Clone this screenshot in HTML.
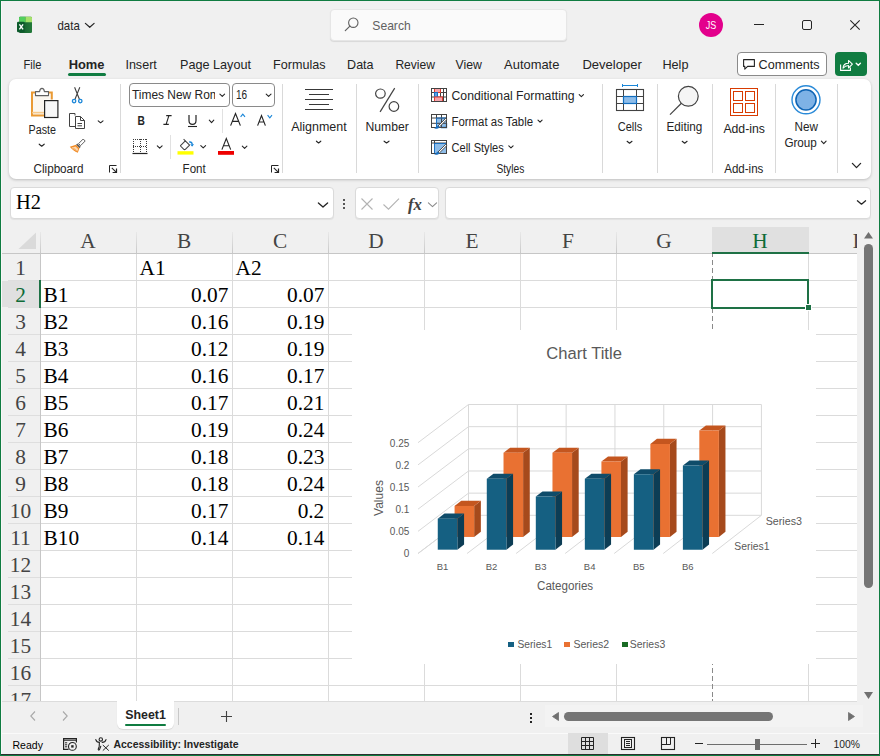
<!DOCTYPE html>
<html><head><meta charset="utf-8">
<style>
*{margin:0;padding:0;box-sizing:border-box}
html,body{width:880px;height:756px;overflow:hidden;background:#f0f0f0;font-family:"Liberation Sans",sans-serif;color:#242424}
.a{position:absolute}
svg{position:absolute;overflow:visible}
#win{position:absolute;left:0;top:0;width:880px;height:756px;overflow:hidden;background:#f0f0f0}
#bd{position:absolute;left:0;top:0;width:880px;height:756px;border:1px solid #107c41;pointer-events:none}
</style></head><body>
<div id="win">
<svg style="left:17px;top:16px" width="16" height="17" viewBox="0 0 16 17">
 <defs><linearGradient id="xg" x1="0" y1="0" x2="1" y2="0"><stop offset="0" stop-color="#125a2c"/><stop offset="1" stop-color="#237a3a"/></linearGradient></defs>
 <rect x="2" y="0.8" width="13" height="16.2" rx="1.3" fill="url(#xg)"/>
 <path d="M3.2 0.8 H8.5 V6.3 H2 V2 Q2 0.8 3.2 0.8 Z" fill="#52cf5c"/>
 <path d="M8.5 0.8 H13.8 Q15 0.8 15 2 V6.3 H8.5 Z" fill="#a6e26c"/>
 <rect x="0" y="5.8" width="7.6" height="10.4" rx="1.2" fill="#0c5a2b"/>
 <path d="M2.4 8.3 L6.1 13.3 M6.1 8.3 L2.4 13.3" stroke="#fff" stroke-width="1.4"/></svg>
<svg style="left:0;top:0" width="1" height="1"><path d="M85.4 23.4 L89.75 27.3 L94.1 23.4" stroke="#242424" stroke-width="1.2" fill="none" stroke-linecap="round" stroke-linejoin="round"/></svg>
<div class="a" style="left:330px;top:9px;width:237px;height:32px;background:#fafafa;border:1px solid #e6e6e6;border-radius:4px;box-shadow:0 1px 1px rgba(0,0,0,0.10)"></div>
<svg style="left:344px;top:17px" width="15" height="15" viewBox="0 0 15 15"><circle cx="9.3" cy="5.7" r="4.7" stroke="#616161" stroke-width="1.1" fill="none"/><path d="M5.9 9.1 L1.3 13.7" stroke="#616161" stroke-width="1.2" stroke-linecap="round"/></svg>
<div class="a" style="left:699px;top:13px;width:24px;height:24px;border-radius:50%;background:#e3008c"></div>
<div class="a" style="left:754px;top:24px;width:10px;height:1px;background:#242424"></div>
<div class="a" style="left:802px;top:20px;width:10px;height:10px;border:1px solid #242424;border-radius:2px"></div>
<svg style="left:850px;top:20px" width="10" height="10"><path d="M0.3 0.3L9.7 9.7M9.7 0.3L0.3 9.7" stroke="#242424" stroke-width="1.1"/></svg>
<div class="a" style="left:68px;top:73px;width:38px;height:3px;border-radius:2px;background:#107c41"></div>
<div class="a" style="left:737px;top:52px;width:90px;height:24px;border:1px solid #8a8a8a;border-radius:4px;background:#fff"></div>
<svg style="left:743px;top:59px" width="12" height="11"><path d="M0.6 0.6 H11.4 V7.4 H4.6 L1.8 10.2 V7.4 H0.6 Z" stroke="#242424" stroke-width="1.1" fill="none" stroke-linejoin="round"/></svg>
<div class="a" style="left:835px;top:52px;width:32px;height:24px;border-radius:4px;background:#107c41"></div>
<svg style="left:839px;top:58px" width="24" height="14"><path d="M1.6 6.5 V12.4 H11.4 V9.5" stroke="#fff" stroke-width="1.1" fill="none"/><path d="M4 10.2 C4.2 7 6.4 5.2 9.5 5.2 V2.4 L13.4 6.2 L9.5 10 V7.4 C7.2 7.4 5.5 8.2 4 10.2 Z" stroke="#fff" stroke-width="1.05" fill="none" stroke-linejoin="round"/><path d="M17.2 5.3 L19.3 7.3 L21.4 5.3" stroke="#fff" stroke-width="1.4" fill="none" stroke-linecap="round"/></svg>
<div class="a" style="left:9px;top:79px;width:862px;height:100px;background:#fff;border-radius:7px;box-shadow:0 1px 3px rgba(0,0,0,0.22)"></div>
<div class="a" style="left:120px;top:84px;width:1px;height:89px;background:#d9d9d9"></div>
<div class="a" style="left:282px;top:84px;width:1px;height:89px;background:#d9d9d9"></div>
<div class="a" style="left:356px;top:84px;width:1px;height:89px;background:#d9d9d9"></div>
<div class="a" style="left:418px;top:84px;width:1px;height:89px;background:#d9d9d9"></div>
<div class="a" style="left:602px;top:84px;width:1px;height:89px;background:#d9d9d9"></div>
<div class="a" style="left:657px;top:84px;width:1px;height:89px;background:#d9d9d9"></div>
<div class="a" style="left:712px;top:84px;width:1px;height:89px;background:#d9d9d9"></div>
<div class="a" style="left:775px;top:84px;width:1px;height:89px;background:#d9d9d9"></div>
<div class="a" style="left:837px;top:84px;width:1px;height:89px;background:#d9d9d9"></div>
<svg style="left:109px;top:165px" width="9" height="9"><path d="M0.5 7.5 V0.5 H7.5" stroke="#242424" stroke-width="1" fill="none"/><path d="M2.8 2.8 L7.4 7.4" stroke="#242424" stroke-width="1.1" fill="none"/><path d="M3.6 7.5 H7.5 V3.6" stroke="#242424" stroke-width="1.2" fill="none"/></svg>
<svg style="left:271px;top:165px" width="9" height="9"><path d="M0.5 7.5 V0.5 H7.5" stroke="#242424" stroke-width="1" fill="none"/><path d="M2.8 2.8 L7.4 7.4" stroke="#242424" stroke-width="1.1" fill="none"/><path d="M3.6 7.5 H7.5 V3.6" stroke="#242424" stroke-width="1.2" fill="none"/></svg>
<svg style="left:30px;top:86px" width="30" height="33" viewBox="0 0 30 33">
 <path d="M2.2 7.4 H21.6 V13.4 H14 V29.4 H2.2 Z" fill="#fbf7f0"/>
 <path d="M2 6.4 V29.4 H14" stroke="#ea9a34" stroke-width="2" fill="none"/>
 <path d="M2 26.6 H14" stroke="#f6c98a" stroke-width="1.6" fill="none"/>
 <path d="M1 6.4 H5.5 M18.5 6.4 H21.8 V13.5" stroke="#ea9a34" stroke-width="2" fill="none"/>
 <path d="M5.5 9.6 V5.6 H9.6 C9.8 3.6 10.6 2.4 12 2.4 C13.4 2.4 14.2 3.6 14.4 5.6 H18.5 V9.6 Z" stroke="#616161" stroke-width="1.1" fill="#fff" stroke-linejoin="round"/>
 <rect x="14.6" y="14.6" width="13.3" height="16.9" stroke="#242424" stroke-width="1.2" fill="#f7f7f7"/></svg>
<svg style="left:0;top:0" width="1" height="1"><path d="M39.199999999999996 144.20000000000002 L41.7 146.2 L44.2 144.20000000000002" stroke="#242424" stroke-width="1.1" fill="none" stroke-linecap="round" stroke-linejoin="round"/></svg>
<svg style="left:70px;top:86px" width="14" height="18" viewBox="0 0 14 18">
 <path d="M4.6 1.2 L9.4 13.2 M9.8 1.2 L5 13.2" stroke="#424242" stroke-width="1.1" fill="none"/>
 <circle cx="4.1" cy="15.1" r="1.7" stroke="#1a86d8" stroke-width="1.3" fill="#fff"/>
 <circle cx="10.3" cy="15.1" r="1.7" stroke="#1a86d8" stroke-width="1.3" fill="#fff"/></svg>
<svg style="left:68px;top:112px" width="18" height="18" viewBox="0 0 18 18">
 <path d="M7 3.5 V1.5 H1.5 V14.5 H7" stroke="#424242" stroke-width="1" fill="none"/>
 <path d="M7.5 4.5 H12.5 L16.5 8.5 V16.5 H7.5 Z" stroke="#424242" stroke-width="1" fill="#fff" stroke-linejoin="round"/>
 <path d="M12.5 4.5 V8.5 H16.5" stroke="#424242" stroke-width="1" fill="none"/>
 <path d="M9.5 11.5 H14 M9.5 13.8 H14" stroke="#424242" stroke-width="1"/></svg>
<svg style="left:0;top:0" width="1" height="1"><path d="M98.2 120.80000000000001 L100.6 122.8 L103.0 120.80000000000001" stroke="#242424" stroke-width="1.1" fill="none" stroke-linecap="round" stroke-linejoin="round"/></svg>
<svg style="left:69px;top:138px" width="17" height="16" viewBox="0 0 17 16">
 <path d="M14.2 1 L16.2 3 L11.6 7.6 L9.6 5.6 Z" stroke="#616161" stroke-width="1" fill="#fff" stroke-linejoin="round"/>
 <path d="M8.4 5.4 L11.8 8.8 L10.4 10.2 L7 6.8 Z" fill="#616161"/>
 <path d="M7 6.8 L10.4 10.2 L8.8 14.8 C5.8 13.6 2.6 11.4 0.8 8.8 Z" fill="#f08a24"/>
 <path d="M6.6 8.4 L9.2 11 L8.2 13.4 C6.2 12.6 4 11.2 2.6 9.6 Z" fill="#fcd7ae"/>
 <path d="M4.2 10 L7.6 12.8" stroke="#f08a24" stroke-width="0.8"/></svg>
<div class="a" style="left:129px;top:83px;width:101px;height:24px;border:1px solid #8a8a8a;border-radius:4px;background:#fff"></div>
<div class="a" style="left:130px;top:84px;width:85px;height:22px;overflow:hidden"><svg style="left:-130px;top:-84px" width="880" height="200"><text x="132.00" y="98.75" font-family="Liberation Sans" font-size="12.3" font-weight="normal" fill="#242424" textLength="101.02" lengthAdjust="spacingAndGlyphs">Times New Roman</text></svg></div>
<svg style="left:0;top:0" width="1" height="1"><path d="M219.9 94.2 L222.25 96.39999999999999 L224.6 94.2" stroke="#242424" stroke-width="1.1" fill="none" stroke-linecap="round" stroke-linejoin="round"/></svg>
<div class="a" style="left:232px;top:83px;width:43px;height:24px;border:1px solid #8a8a8a;border-radius:4px;background:#fff"></div>
<svg style="left:0;top:0" width="1" height="1"><path d="M266.2 94.2 L268.6 96.39999999999999 L271.0 94.2" stroke="#242424" stroke-width="1.1" fill="none" stroke-linecap="round" stroke-linejoin="round"/></svg>
<svg style="left:163px;top:115px" width="9" height="10"><path d="M3.2 0.6 H8.6 M0.4 9.4 H5.8 M5.9 0.6 L3.1 9.4" stroke="#242424" stroke-width="1.1" fill="none"/></svg>
<svg style="left:188px;top:115px" width="10" height="13"><path d="M1 0 V5.6 C1 8 2.3 9.4 4.5 9.4 C6.7 9.4 8 8 8 5.6 V0" stroke="#242424" stroke-width="1.2" fill="none"/><path d="M0 11.5 H9" stroke="#242424" stroke-width="1.1"/></svg>
<svg style="left:0;top:0" width="1" height="1"><path d="M209.3 120.2 L211.55 122.6 L213.79999999999998 120.2" stroke="#242424" stroke-width="1.1" fill="none" stroke-linecap="round" stroke-linejoin="round"/></svg>
<div class="a" style="left:222px;top:109px;width:1px;height:24px;background:#e1e1e1"></div>
<svg style="left:230px;top:113px" width="12" height="13"><path d="M0.6 12.6 L5.5 0.6 L10.4 12.6 M2.4 8.4 H8.6" stroke="#242424" stroke-width="1.15" fill="none"/></svg>
<svg style="left:240px;top:113px" width="6" height="5"><path d="M0.6 3.8 L2.8 1.2 L5 3.8" stroke="#1a86d8" stroke-width="1.1" fill="none"/></svg>
<svg style="left:257px;top:115px" width="10" height="11"><path d="M0.6 10.6 L4.5 0.6 L8.4 10.6 M2 7 H7" stroke="#242424" stroke-width="1.15" fill="none"/></svg>
<svg style="left:267px;top:114px" width="6" height="5"><path d="M0.6 1.2 L2.8 3.8 L5 1.2" stroke="#1a86d8" stroke-width="1.1" fill="none"/></svg>
<svg style="left:132px;top:138px" width="17" height="17">
 <path d="M1.5 1 V15 M14.5 1 V15 M8.5 1 V15 M1 1.5 H15 M1 8.5 H15" stroke="#3a3a3a" stroke-width="1" stroke-dasharray="1 1" fill="none"/>
 <path d="M0.5 15.5 H15.5" stroke="#242424" stroke-width="1.2"/></svg>
<svg style="left:0;top:0" width="1" height="1"><path d="M157.3 145.8 L159.7 148.2 L162.1 145.8" stroke="#242424" stroke-width="1.1" fill="none" stroke-linecap="round" stroke-linejoin="round"/></svg>
<div class="a" style="left:170px;top:135px;width:1px;height:24px;background:#e1e1e1"></div>
<svg style="left:177px;top:137px" width="17" height="18">
 <path d="M3.5 8.6 L8.3 3.8 L12.6 8.1 L8.6 12.1 C8 12.7 7.2 12.7 6.6 12.1 L3.5 9 Z" stroke="#424242" stroke-width="1.05" fill="none" stroke-linejoin="round"/>
 <path d="M8.3 3.8 L6.6 2.1" stroke="#424242" stroke-width="1.05"/>
 <path d="M12.2 5 C14.6 4.6 15.4 6.2 15.2 8.6" stroke="#1a86d8" stroke-width="1.4" fill="none"/>
 <path d="M13.8 7.2 L15.2 9.2 L16.4 7.2" stroke="#1a86d8" stroke-width="1" fill="none"/>
 <rect x="0.5" y="14.2" width="16" height="3.4" fill="#ffff00"/></svg>
<svg style="left:0;top:0" width="1" height="1"><path d="M200.8 145.6 L203.2 147.79999999999998 L205.6 145.6" stroke="#242424" stroke-width="1.1" fill="none" stroke-linecap="round" stroke-linejoin="round"/></svg>
<svg style="left:218px;top:138px" width="17" height="17"><path d="M3.9 11.6 L8.3 0.6 L12.7 11.6 M5.5 7.7 H11.1" stroke="#242424" stroke-width="1.1" fill="none"/><rect x="0" y="13" width="16" height="3.8" fill="#ee0000"/></svg>
<svg style="left:0;top:0" width="1" height="1"><path d="M242.3 146.1 L244.60000000000002 148.29999999999998 L246.9 146.1" stroke="#242424" stroke-width="1.1" fill="none" stroke-linecap="round" stroke-linejoin="round"/></svg>
<svg style="left:305px;top:88px" width="29" height="23"><path d="M0 1.5 H28 M4 6.5 H24 M0 11.5 H28 M4 16.5 H24 M0 21.5 H28" stroke="#383838" stroke-width="1"/></svg>
<svg style="left:0;top:0" width="1" height="1"><path d="M316.4 141.20000000000002 L318.6 143.0 L320.8 141.20000000000002" stroke="#242424" stroke-width="1.1" fill="none" stroke-linecap="round" stroke-linejoin="round"/></svg>
<svg style="left:374px;top:87px" width="27" height="26"><ellipse cx="6.4" cy="6.6" rx="4.8" ry="4.6" stroke="#424242" stroke-width="1.2" fill="none"/><ellipse cx="19.9" cy="19.5" rx="4.8" ry="4.8" stroke="#424242" stroke-width="1.2" fill="none"/><path d="M20.7 1.1 L6.1 24.9" stroke="#424242" stroke-width="1.2"/></svg>
<svg style="left:0;top:0" width="1" height="1"><path d="M384.09999999999997 141.20000000000002 L386.54999999999995 143.0 L389.0 141.20000000000002" stroke="#242424" stroke-width="1.1" fill="none" stroke-linecap="round" stroke-linejoin="round"/></svg>
<svg style="left:431px;top:88px" width="17" height="15">
 <rect x="0.5" y="0.5" width="15" height="13" fill="#fff"/>
 <path d="M0.5 4.5 H15.5 M0.5 9 H15.5 M3.5 0.5 V13.5 M9.5 0.5 V13.5 M12.5 0.5 V13.5" stroke="#424242" stroke-width="1"/>
 <rect x="3.5" y="0.5" width="6" height="4" fill="#f4a3aa" stroke="#e23b2e" stroke-width="1"/>
 <rect x="3.5" y="4.5" width="3" height="4.5" fill="#5aa2e6" stroke="#1a6fc0" stroke-width="1"/>
 <rect x="3.5" y="9" width="8" height="4.5" fill="#f4a3aa" stroke="#e23b2e" stroke-width="1"/>
 <rect x="0.5" y="0.5" width="15" height="13" fill="none" stroke="#424242" stroke-width="1"/></svg>
<svg style="left:0;top:0" width="1" height="1"><path d="M579.1999999999999 94.60000000000001 L581.3499999999999 96.6 L583.5 94.60000000000001" stroke="#242424" stroke-width="1.1" fill="none" stroke-linecap="round" stroke-linejoin="round"/></svg>
<svg style="left:431px;top:114px" width="17" height="15">
 <rect x="0.5" y="0.5" width="15" height="13" fill="#fff"/>
 <rect x="5.5" y="4" width="10" height="9.5" fill="#8dbce8"/>
 <path d="M0.5 4 H15.5 M0.5 9.3 H15.5 M5.5 0.5 V13.5 M10.5 0.5 V13.5" stroke="#424242" stroke-width="1"/>
 <path d="M5.5 13.5 V4 H15.5" stroke="#1a6fc0" stroke-width="1" fill="none"/>
 <path d="M15.5 9 V13.5 H10" stroke="#1a6fc0" stroke-width="1.3" fill="none"/>
 <rect x="0.5" y="0.5" width="15" height="13" fill="none" stroke="#424242" stroke-width="1"/>
 <path d="M14.6 4.4 L15.8 5.6 L8.2 13.2 L7 12 Z" fill="#fff" stroke="#424242" stroke-width="0.9" stroke-linejoin="round"/>
 <path d="M6.8 11.6 L8.6 13.4 C7.6 14.6 5.2 15 3.2 14.6 C4.4 13.8 5.4 12.6 6.8 11.6 Z" fill="#1a6fc0"/></svg>
<svg style="left:0;top:0" width="1" height="1"><path d="M538.0 120.2 L540.05 122.19999999999999 L542.1 120.2" stroke="#242424" stroke-width="1.1" fill="none" stroke-linecap="round" stroke-linejoin="round"/></svg>
<svg style="left:431px;top:140px" width="17" height="15">
 <rect x="0.5" y="0.5" width="15" height="13" fill="#fff"/>
 <rect x="3.5" y="3" width="12" height="10.5" fill="#8dbce8"/>
 <path d="M0.5 3 H15.5 M3.5 0.5 V13.5" stroke="#424242" stroke-width="1"/>
 <path d="M3.5 13.5 V3.5 H15.5" stroke="#1a6fc0" stroke-width="1" fill="none"/>
 <rect x="0.5" y="0.5" width="15" height="13" fill="none" stroke="#424242" stroke-width="1"/>
 <path d="M14.6 4.4 L15.8 5.6 L8.2 13.2 L7 12 Z" fill="#fff" stroke="#424242" stroke-width="0.9" stroke-linejoin="round"/>
 <path d="M6.8 11.6 L8.6 13.4 C7.6 14.6 5.2 15 3.2 14.6 C4.4 13.8 5.4 12.6 6.8 11.6 Z" fill="#1a6fc0"/></svg>
<svg style="left:0;top:0" width="1" height="1"><path d="M508.79999999999995 145.8 L510.95 147.79999999999998 L513.1 145.8" stroke="#242424" stroke-width="1.1" fill="none" stroke-linecap="round" stroke-linejoin="round"/></svg>
<svg style="left:615px;top:84px" width="30" height="28">
 <path d="M7.5 1.5 H22.5 M7.5 0 V3 M22.5 0 V3" stroke="#1a86d8" stroke-width="1"/>
 <rect x="8.5" y="12.5" width="13" height="7" fill="#8dbce8"/>
 <rect x="1.5" y="5.5" width="27" height="21" stroke="#424242" stroke-width="1.1" fill="none"/>
 <path d="M8.5 5 V26.5 M21.5 5 V26.5 M1 12.5 H29 M1 19.5 H29" stroke="#424242" stroke-width="1"/>
 <rect x="8.5" y="12.5" width="13" height="7" stroke="#0f6cbd" stroke-width="1.2" fill="none"/></svg>
<svg style="left:0;top:0" width="1" height="1"><path d="M627.1 141.3 L629.55 143.2 L632.0 141.3" stroke="#242424" stroke-width="1.1" fill="none" stroke-linecap="round" stroke-linejoin="round"/></svg>
<svg style="left:668px;top:84px" width="34" height="32"><circle cx="20.3" cy="12.3" r="9.9" stroke="#424242" stroke-width="1.2" fill="#f5f5f5"/><path d="M13.4 19.3 L2 30.6" stroke="#424242" stroke-width="1.2"/></svg>
<svg style="left:0;top:0" width="1" height="1"><path d="M682.1999999999999 141.3 L684.65 143.2 L687.1 141.3" stroke="#242424" stroke-width="1.1" fill="none" stroke-linecap="round" stroke-linejoin="round"/></svg>
<svg style="left:729px;top:87px" width="30" height="30"><rect x="1.5" y="1.5" width="27" height="27" stroke="#d83b01" stroke-width="1" fill="none"/><rect x="4.5" y="4.5" width="9" height="9" stroke="#d83b01" stroke-width="1" fill="none"/><rect x="16.5" y="4.5" width="9" height="9" stroke="#d83b01" stroke-width="1" fill="none"/><rect x="4.5" y="16.5" width="9" height="9" stroke="#d83b01" stroke-width="1" fill="none"/><rect x="16.5" y="16.5" width="9" height="9" stroke="#d83b01" stroke-width="1" fill="none"/></svg>
<svg style="left:790px;top:84px" width="32" height="32"><circle cx="16" cy="15.8" r="14" stroke="#2a8ad8" stroke-width="1.4" fill="#fff"/><circle cx="16" cy="15.8" r="10.1" stroke="#0f64b4" stroke-width="1.5" fill="#7eb2e6"/></svg>
<svg style="left:0;top:0" width="1" height="1"><path d="M821.4 141.1 L823.75 143.6 L826.1 141.1" stroke="#242424" stroke-width="1.1" fill="none" stroke-linecap="round" stroke-linejoin="round"/></svg>
<svg style="left:0;top:0" width="1" height="1"><path d="M852.4 163.4 L856.5 167.6 L860.6 163.4" stroke="#242424" stroke-width="1.3" fill="none" stroke-linecap="round" stroke-linejoin="round"/></svg>
<div class="a" style="left:10px;top:187px;width:324px;height:32px;background:#fff;border-radius:4px;border:1px solid #dadada;box-shadow:0 1px 1px rgba(0,0,0,0.06)"></div>
<svg style="left:0;top:0" width="1" height="1"><path d="M318.4 202.9 L323.0 207.1 L327.6 202.9" stroke="#242424" stroke-width="1.3" fill="none" stroke-linecap="round" stroke-linejoin="round"/></svg>
<div class="a" style="left:343px;top:199px;width:2px;height:2px;background:#242424;border-radius:1px"></div>
<div class="a" style="left:343px;top:203px;width:2px;height:2px;background:#242424;border-radius:1px"></div>
<div class="a" style="left:343px;top:207px;width:2px;height:2px;background:#242424;border-radius:1px"></div>
<div class="a" style="left:355px;top:187px;width:84px;height:32px;background:#fff;border-radius:4px;border:1px solid #dadada;box-shadow:0 1px 1px rgba(0,0,0,0.06)"></div>
<svg style="left:361px;top:198px" width="12" height="12"><path d="M0.5 0.5 L11.5 11.5 M11.5 0.5 L0.5 11.5" stroke="#b3b3b3" stroke-width="1.1"/></svg>
<svg style="left:383px;top:198px" width="17" height="12"><path d="M0.5 6.5 L5.5 11.2 L16 0.6" stroke="#b3b3b3" stroke-width="1.1" fill="none"/></svg>
<svg style="left:0;top:0" width="1" height="1"><path d="M428.4 202.9 L432.5 206.6 L436.6 202.9" stroke="#8a8a8a" stroke-width="1.1" fill="none" stroke-linecap="round" stroke-linejoin="round"/></svg>
<div class="a" style="left:445px;top:187px;width:426px;height:32px;background:#fff;border-radius:4px;border:1px solid #dadada;box-shadow:0 1px 1px rgba(0,0,0,0.06)"></div>
<svg style="left:0;top:0" width="1" height="1"><path d="M857.4 200.8 L861.5 204.2 L865.6 200.8" stroke="#242424" stroke-width="1.3" fill="none" stroke-linecap="round" stroke-linejoin="round"/></svg>
<div class="a" style="left:41px;top:254px;width:816px;height:447px;background:#fff"></div>
<div class="a" style="left:41px;top:280px;width:816px;height:1px;background:#dbdbdb"></div>
<div class="a" style="left:8px;top:280px;width:32px;height:1px;background:#dedede"></div>
<div class="a" style="left:41px;top:307px;width:816px;height:1px;background:#dbdbdb"></div>
<div class="a" style="left:8px;top:307px;width:32px;height:1px;background:#dedede"></div>
<div class="a" style="left:41px;top:334px;width:816px;height:1px;background:#dbdbdb"></div>
<div class="a" style="left:8px;top:334px;width:32px;height:1px;background:#dedede"></div>
<div class="a" style="left:41px;top:361px;width:816px;height:1px;background:#dbdbdb"></div>
<div class="a" style="left:8px;top:361px;width:32px;height:1px;background:#dedede"></div>
<div class="a" style="left:41px;top:388px;width:816px;height:1px;background:#dbdbdb"></div>
<div class="a" style="left:8px;top:388px;width:32px;height:1px;background:#dedede"></div>
<div class="a" style="left:41px;top:415px;width:816px;height:1px;background:#dbdbdb"></div>
<div class="a" style="left:8px;top:415px;width:32px;height:1px;background:#dedede"></div>
<div class="a" style="left:41px;top:442px;width:816px;height:1px;background:#dbdbdb"></div>
<div class="a" style="left:8px;top:442px;width:32px;height:1px;background:#dedede"></div>
<div class="a" style="left:41px;top:469px;width:816px;height:1px;background:#dbdbdb"></div>
<div class="a" style="left:8px;top:469px;width:32px;height:1px;background:#dedede"></div>
<div class="a" style="left:41px;top:496px;width:816px;height:1px;background:#dbdbdb"></div>
<div class="a" style="left:8px;top:496px;width:32px;height:1px;background:#dedede"></div>
<div class="a" style="left:41px;top:523px;width:816px;height:1px;background:#dbdbdb"></div>
<div class="a" style="left:8px;top:523px;width:32px;height:1px;background:#dedede"></div>
<div class="a" style="left:41px;top:550px;width:816px;height:1px;background:#dbdbdb"></div>
<div class="a" style="left:8px;top:550px;width:32px;height:1px;background:#dedede"></div>
<div class="a" style="left:41px;top:577px;width:816px;height:1px;background:#dbdbdb"></div>
<div class="a" style="left:8px;top:577px;width:32px;height:1px;background:#dedede"></div>
<div class="a" style="left:41px;top:604px;width:816px;height:1px;background:#dbdbdb"></div>
<div class="a" style="left:8px;top:604px;width:32px;height:1px;background:#dedede"></div>
<div class="a" style="left:41px;top:631px;width:816px;height:1px;background:#dbdbdb"></div>
<div class="a" style="left:8px;top:631px;width:32px;height:1px;background:#dedede"></div>
<div class="a" style="left:41px;top:658px;width:816px;height:1px;background:#dbdbdb"></div>
<div class="a" style="left:8px;top:658px;width:32px;height:1px;background:#dedede"></div>
<div class="a" style="left:41px;top:685px;width:816px;height:1px;background:#dbdbdb"></div>
<div class="a" style="left:8px;top:685px;width:32px;height:1px;background:#dedede"></div>
<div class="a" style="left:136px;top:254px;width:1px;height:447px;background:#dbdbdb"></div>
<div class="a" style="left:136px;top:232px;width:1px;height:21px;background:linear-gradient(to bottom,#e8e8e8,#c9c9c9)"></div>
<div class="a" style="left:232px;top:254px;width:1px;height:447px;background:#dbdbdb"></div>
<div class="a" style="left:232px;top:232px;width:1px;height:21px;background:linear-gradient(to bottom,#e8e8e8,#c9c9c9)"></div>
<div class="a" style="left:328px;top:254px;width:1px;height:447px;background:#dbdbdb"></div>
<div class="a" style="left:328px;top:232px;width:1px;height:21px;background:linear-gradient(to bottom,#e8e8e8,#c9c9c9)"></div>
<div class="a" style="left:424px;top:254px;width:1px;height:447px;background:#dbdbdb"></div>
<div class="a" style="left:424px;top:232px;width:1px;height:21px;background:linear-gradient(to bottom,#e8e8e8,#c9c9c9)"></div>
<div class="a" style="left:520px;top:254px;width:1px;height:447px;background:#dbdbdb"></div>
<div class="a" style="left:520px;top:232px;width:1px;height:21px;background:linear-gradient(to bottom,#e8e8e8,#c9c9c9)"></div>
<div class="a" style="left:616px;top:254px;width:1px;height:447px;background:#dbdbdb"></div>
<div class="a" style="left:616px;top:232px;width:1px;height:21px;background:linear-gradient(to bottom,#e8e8e8,#c9c9c9)"></div>
<div class="a" style="left:712px;top:254px;width:1px;height:447px;background:#dbdbdb"></div>
<div class="a" style="left:712px;top:232px;width:1px;height:21px;background:linear-gradient(to bottom,#e8e8e8,#c9c9c9)"></div>
<div class="a" style="left:808px;top:254px;width:1px;height:447px;background:#dbdbdb"></div>
<div class="a" style="left:808px;top:232px;width:1px;height:21px;background:linear-gradient(to bottom,#e8e8e8,#c9c9c9)"></div>
<div class="a" style="left:0px;top:253px;width:857px;height:1px;background:#c6c6c6"></div>
<div class="a" style="left:40px;top:232px;width:1px;height:21px;background:linear-gradient(to bottom,#e8e8e8,#c9c9c9)"></div>
<div class="a" style="left:40px;top:253px;width:1px;height:448px;background:#c6c6c6"></div>
<svg style="left:18px;top:232px" width="19" height="18"><path d="M18 0.5 V17 H0.5 Z" fill="#dadada"/></svg>
<div class="a" style="left:712px;top:227px;width:97px;height:26px;background:#e0e0e0"></div>
<div class="a" style="left:712px;top:252px;width:97px;height:2px;background:#1e7145"></div>
<div class="a" style="left:1px;top:281px;width:38px;height:26px;background:#e0e0e0"></div>
<div class="a" style="left:39px;top:280px;width:2px;height:28px;background:#1e7145"></div>
<div class="a" style="left:0;top:232px;width:857px;height:469px;overflow:hidden"><svg style="left:0;top:-232px" width="880" height="756"><text x="88" y="247.7" text-anchor="middle" font-family="Liberation Serif" font-size="21.33" fill="#444444">A</text><text x="184" y="247.7" text-anchor="middle" font-family="Liberation Serif" font-size="21.33" fill="#444444">B</text><text x="280" y="247.7" text-anchor="middle" font-family="Liberation Serif" font-size="21.33" fill="#444444">C</text><text x="376" y="247.7" text-anchor="middle" font-family="Liberation Serif" font-size="21.33" fill="#444444">D</text><text x="472" y="247.7" text-anchor="middle" font-family="Liberation Serif" font-size="21.33" fill="#444444">E</text><text x="568" y="247.7" text-anchor="middle" font-family="Liberation Serif" font-size="21.33" fill="#444444">F</text><text x="664" y="247.7" text-anchor="middle" font-family="Liberation Serif" font-size="21.33" fill="#444444">G</text><text x="760" y="247.7" text-anchor="middle" font-family="Liberation Serif" font-size="21.33" fill="#0e6b38">H</text><text x="856" y="247.7" text-anchor="middle" font-family="Liberation Serif" font-size="21.33" fill="#444444">I</text><text x="20.5" y="274.7" text-anchor="middle" font-family="Liberation Serif" font-size="21.33" fill="#444444">1</text><text x="20.5" y="301.7" text-anchor="middle" font-family="Liberation Serif" font-size="21.33" fill="#0e6b38">2</text><text x="20.5" y="328.7" text-anchor="middle" font-family="Liberation Serif" font-size="21.33" fill="#444444">3</text><text x="20.5" y="355.7" text-anchor="middle" font-family="Liberation Serif" font-size="21.33" fill="#444444">4</text><text x="20.5" y="382.7" text-anchor="middle" font-family="Liberation Serif" font-size="21.33" fill="#444444">5</text><text x="20.5" y="409.7" text-anchor="middle" font-family="Liberation Serif" font-size="21.33" fill="#444444">6</text><text x="20.5" y="436.7" text-anchor="middle" font-family="Liberation Serif" font-size="21.33" fill="#444444">7</text><text x="20.5" y="463.7" text-anchor="middle" font-family="Liberation Serif" font-size="21.33" fill="#444444">8</text><text x="20.5" y="490.7" text-anchor="middle" font-family="Liberation Serif" font-size="21.33" fill="#444444">9</text><text x="20.5" y="517.7" text-anchor="middle" font-family="Liberation Serif" font-size="21.33" fill="#444444">10</text><text x="20.5" y="544.7" text-anchor="middle" font-family="Liberation Serif" font-size="21.33" fill="#444444">11</text><text x="20.5" y="571.7" text-anchor="middle" font-family="Liberation Serif" font-size="21.33" fill="#444444">12</text><text x="20.5" y="598.7" text-anchor="middle" font-family="Liberation Serif" font-size="21.33" fill="#444444">13</text><text x="20.5" y="625.7" text-anchor="middle" font-family="Liberation Serif" font-size="21.33" fill="#444444">14</text><text x="20.5" y="652.7" text-anchor="middle" font-family="Liberation Serif" font-size="21.33" fill="#444444">15</text><text x="20.5" y="679.7" text-anchor="middle" font-family="Liberation Serif" font-size="21.33" fill="#444444">16</text><text x="20.5" y="706.7" text-anchor="middle" font-family="Liberation Serif" font-size="21.33" fill="#444444">17</text><text x="139.5" y="274.7" font-family="Liberation Serif" font-size="21.33" fill="#000">A1</text><text x="235.5" y="274.7" font-family="Liberation Serif" font-size="21.33" fill="#000">A2</text><text x="43.5" y="301.7" font-family="Liberation Serif" font-size="21.33" fill="#000">B1</text><text x="228.3" y="301.7" text-anchor="end" font-family="Liberation Serif" font-size="21.33" fill="#000">0.07</text><text x="324.3" y="301.7" text-anchor="end" font-family="Liberation Serif" font-size="21.33" fill="#000">0.07</text><text x="43.5" y="328.7" font-family="Liberation Serif" font-size="21.33" fill="#000">B2</text><text x="228.3" y="328.7" text-anchor="end" font-family="Liberation Serif" font-size="21.33" fill="#000">0.16</text><text x="324.3" y="328.7" text-anchor="end" font-family="Liberation Serif" font-size="21.33" fill="#000">0.19</text><text x="43.5" y="355.7" font-family="Liberation Serif" font-size="21.33" fill="#000">B3</text><text x="228.3" y="355.7" text-anchor="end" font-family="Liberation Serif" font-size="21.33" fill="#000">0.12</text><text x="324.3" y="355.7" text-anchor="end" font-family="Liberation Serif" font-size="21.33" fill="#000">0.19</text><text x="43.5" y="382.7" font-family="Liberation Serif" font-size="21.33" fill="#000">B4</text><text x="228.3" y="382.7" text-anchor="end" font-family="Liberation Serif" font-size="21.33" fill="#000">0.16</text><text x="324.3" y="382.7" text-anchor="end" font-family="Liberation Serif" font-size="21.33" fill="#000">0.17</text><text x="43.5" y="409.7" font-family="Liberation Serif" font-size="21.33" fill="#000">B5</text><text x="228.3" y="409.7" text-anchor="end" font-family="Liberation Serif" font-size="21.33" fill="#000">0.17</text><text x="324.3" y="409.7" text-anchor="end" font-family="Liberation Serif" font-size="21.33" fill="#000">0.21</text><text x="43.5" y="436.7" font-family="Liberation Serif" font-size="21.33" fill="#000">B6</text><text x="228.3" y="436.7" text-anchor="end" font-family="Liberation Serif" font-size="21.33" fill="#000">0.19</text><text x="324.3" y="436.7" text-anchor="end" font-family="Liberation Serif" font-size="21.33" fill="#000">0.24</text><text x="43.5" y="463.7" font-family="Liberation Serif" font-size="21.33" fill="#000">B7</text><text x="228.3" y="463.7" text-anchor="end" font-family="Liberation Serif" font-size="21.33" fill="#000">0.18</text><text x="324.3" y="463.7" text-anchor="end" font-family="Liberation Serif" font-size="21.33" fill="#000">0.23</text><text x="43.5" y="490.7" font-family="Liberation Serif" font-size="21.33" fill="#000">B8</text><text x="228.3" y="490.7" text-anchor="end" font-family="Liberation Serif" font-size="21.33" fill="#000">0.18</text><text x="324.3" y="490.7" text-anchor="end" font-family="Liberation Serif" font-size="21.33" fill="#000">0.24</text><text x="43.5" y="517.7" font-family="Liberation Serif" font-size="21.33" fill="#000">B9</text><text x="228.3" y="517.7" text-anchor="end" font-family="Liberation Serif" font-size="21.33" fill="#000">0.17</text><text x="324.3" y="517.7" text-anchor="end" font-family="Liberation Serif" font-size="21.33" fill="#000">0.2</text><text x="43.5" y="544.7" font-family="Liberation Serif" font-size="21.33" fill="#000">B10</text><text x="228.3" y="544.7" text-anchor="end" font-family="Liberation Serif" font-size="21.33" fill="#000">0.14</text><text x="324.3" y="544.7" text-anchor="end" font-family="Liberation Serif" font-size="21.33" fill="#000">0.14</text></svg></div>
<div class="a" style="left:712px;top:254px;width:1px;height:447px;background:#fff"></div>
<div class="a" style="left:712px;top:254px;width:1px;height:447px;background:repeating-linear-gradient(to bottom,#8a8a8a 0 5px,transparent 5px 8px);background-position:0 -2px"></div>
<div class="a" style="left:711px;top:279px;width:98px;height:30px;border:2px solid #1e7145"></div>
<div class="a" style="left:805px;top:304px;width:7px;height:7px;background:#1e7145;border:1px solid #fff"></div>
<svg style="left:352px;top:330px" width="464" height="334"><rect x="0" y="0" width="464" height="334" fill="#fff"/><path d="M66.00 223.50 L116.50 185.31" stroke="#d9d9d9" stroke-width="1" fill="none"/><path d="M116.50 185.31 L409.42 185.31" stroke="#d9d9d9" stroke-width="1" fill="none"/><path d="M66.00 201.34 L116.50 163.15" stroke="#d9d9d9" stroke-width="1" fill="none"/><path d="M116.50 163.15 L409.42 163.15" stroke="#d9d9d9" stroke-width="1" fill="none"/><path d="M66.00 179.18 L116.50 140.99" stroke="#d9d9d9" stroke-width="1" fill="none"/><path d="M116.50 140.99 L409.42 140.99" stroke="#d9d9d9" stroke-width="1" fill="none"/><path d="M66.00 157.02 L116.50 118.83" stroke="#d9d9d9" stroke-width="1" fill="none"/><path d="M116.50 118.83 L409.42 118.83" stroke="#d9d9d9" stroke-width="1" fill="none"/><path d="M66.00 134.86 L116.50 96.67" stroke="#d9d9d9" stroke-width="1" fill="none"/><path d="M116.50 96.67 L409.42 96.67" stroke="#d9d9d9" stroke-width="1" fill="none"/><path d="M66.00 112.70 L116.50 74.51" stroke="#d9d9d9" stroke-width="1" fill="none"/><path d="M116.50 74.51 L409.42 74.51" stroke="#d9d9d9" stroke-width="1" fill="none"/><path d="M116.50 185.31 L116.50 74.51" stroke="#d9d9d9" stroke-width="1" fill="none"/><path d="M66.00 223.50 L116.50 185.31" stroke="#d9d9d9" stroke-width="1" fill="none"/><path d="M165.32 185.31 L165.32 74.51" stroke="#d9d9d9" stroke-width="1" fill="none"/><path d="M115.05 223.50 L165.32 185.31" stroke="#d9d9d9" stroke-width="1" fill="none"/><path d="M214.14 185.31 L214.14 74.51" stroke="#d9d9d9" stroke-width="1" fill="none"/><path d="M164.10 223.50 L214.14 185.31" stroke="#d9d9d9" stroke-width="1" fill="none"/><path d="M262.96 185.31 L262.96 74.51" stroke="#d9d9d9" stroke-width="1" fill="none"/><path d="M213.15 223.50 L262.96 185.31" stroke="#d9d9d9" stroke-width="1" fill="none"/><path d="M311.78 185.31 L311.78 74.51" stroke="#d9d9d9" stroke-width="1" fill="none"/><path d="M262.20 223.50 L311.78 185.31" stroke="#d9d9d9" stroke-width="1" fill="none"/><path d="M360.60 185.31 L360.60 74.51" stroke="#d9d9d9" stroke-width="1" fill="none"/><path d="M311.25 223.50 L360.60 185.31" stroke="#d9d9d9" stroke-width="1" fill="none"/><path d="M409.42 185.31 L409.42 74.51" stroke="#d9d9d9" stroke-width="1" fill="none"/><path d="M360.30 223.50 L409.42 185.31" stroke="#d9d9d9" stroke-width="1" fill="none"/><polygon points="122.15,206.95 128.86,201.86 128.86,170.83 122.15,175.93" fill="#a64a1c"/><polygon points="102.57,175.93 122.15,175.93 128.86,170.83 109.29,170.83" fill="#c4561f"/><polygon points="102.57,206.95 122.15,206.95 122.15,175.93 102.57,175.93" fill="#e97132"/><polygon points="171.10,206.95 177.78,201.86 177.78,117.65 171.10,122.74" fill="#a64a1c"/><polygon points="151.52,122.74 171.10,122.74 177.78,117.65 158.21,117.65" fill="#c4561f"/><polygon points="151.52,206.95 171.10,206.95 171.10,122.74 151.52,122.74" fill="#e97132"/><polygon points="220.05,206.95 226.70,201.86 226.70,117.65 220.05,122.74" fill="#a64a1c"/><polygon points="200.47,122.74 220.05,122.74 226.70,117.65 207.13,117.65" fill="#c4561f"/><polygon points="200.47,206.95 220.05,206.95 220.05,122.74 200.47,122.74" fill="#e97132"/><polygon points="269.00,206.95 275.62,201.86 275.62,126.51 269.00,131.61" fill="#a64a1c"/><polygon points="249.42,131.61 269.00,131.61 275.62,126.51 256.05,126.51" fill="#c4561f"/><polygon points="249.42,206.95 269.00,206.95 269.00,131.61 249.42,131.61" fill="#e97132"/><polygon points="317.95,206.95 324.54,201.86 324.54,108.79 317.95,113.88" fill="#a64a1c"/><polygon points="298.37,113.88 317.95,113.88 324.54,108.79 304.97,108.79" fill="#c4561f"/><polygon points="298.37,206.95 317.95,206.95 317.95,113.88 298.37,113.88" fill="#e97132"/><polygon points="366.90,206.95 373.46,201.86 373.46,95.49 366.90,100.58" fill="#a64a1c"/><polygon points="347.32,100.58 366.90,100.58 373.46,95.49 353.89,95.49" fill="#c4561f"/><polygon points="347.32,206.95 366.90,206.95 366.90,100.58 347.32,100.58" fill="#e97132"/><polygon points="105.37,219.68 112.08,214.59 112.08,183.57 105.37,188.66" fill="#0c3d55"/><polygon points="85.76,188.66 105.37,188.66 112.08,183.57 92.48,183.57" fill="#0f4c6a"/><polygon points="85.76,219.68 105.37,219.68 105.37,188.66 85.76,188.66" fill="#156082"/><polygon points="154.40,219.68 161.08,214.59 161.08,143.68 154.40,148.77" fill="#0c3d55"/><polygon points="134.79,148.77 154.40,148.77 161.08,143.68 141.48,143.68" fill="#0f4c6a"/><polygon points="134.79,219.68 154.40,219.68 154.40,148.77 134.79,148.77" fill="#156082"/><polygon points="203.42,219.68 210.07,214.59 210.07,161.41 203.42,166.50" fill="#0c3d55"/><polygon points="183.81,166.50 203.42,166.50 210.07,161.41 190.47,161.41" fill="#0f4c6a"/><polygon points="183.81,219.68 203.42,219.68 203.42,166.50 183.81,166.50" fill="#156082"/><polygon points="252.45,219.68 259.07,214.59 259.07,143.68 252.45,148.77" fill="#0c3d55"/><polygon points="232.84,148.77 252.45,148.77 259.07,143.68 239.47,143.68" fill="#0f4c6a"/><polygon points="232.84,219.68 252.45,219.68 252.45,148.77 232.84,148.77" fill="#156082"/><polygon points="301.48,219.68 308.07,214.59 308.07,139.25 301.48,144.34" fill="#0c3d55"/><polygon points="281.87,144.34 301.48,144.34 308.07,139.25 288.47,139.25" fill="#0f4c6a"/><polygon points="281.87,219.68 301.48,219.68 301.48,144.34 281.87,144.34" fill="#156082"/><polygon points="350.50,219.68 357.06,214.59 357.06,130.38 350.50,135.47" fill="#0c3d55"/><polygon points="330.89,135.47 350.50,135.47 357.06,130.38 337.46,130.38" fill="#0f4c6a"/><polygon points="330.89,219.68 350.50,219.68 350.50,135.47 330.89,135.47" fill="#156082"/></svg>
<div class="a" style="left:508.1px;top:641.7px;width:5.8px;height:5.8px;background:#156082"></div>
<div class="a" style="left:563.8px;top:641.7px;width:5.8px;height:5.8px;background:#e97132"></div>
<div class="a" style="left:622.1px;top:641.7px;width:5.8px;height:5.8px;background:#196b24"></div>
<div class="a" style="left:857px;top:232px;width:21px;height:469px;background:#f0f0f0"></div>
<svg style="left:864px;top:232px" width="9" height="7"><path d="M0 6.5 L4.5 0 L9 6.5Z" fill="#707070"/></svg>
<div class="a" style="left:864px;top:244px;width:9px;height:344px;border-radius:5px;background:#757575"></div>
<svg style="left:864px;top:692px" width="9" height="7"><path d="M0 0 L4.5 7 L9 0Z" fill="#707070"/></svg>
<div class="a" style="left:1px;top:701px;width:877px;height:32px;background:#f0f0f0"></div>
<div class="a" style="left:1px;top:701px;width:856px;height:1px;background:#dcdcdc"></div>
<svg style="left:30px;top:711px" width="6" height="10"><path d="M5 0.5 L0.8 5 L5 9.5" stroke="#a8a8a8" stroke-width="1.1" fill="none"/></svg>
<svg style="left:62px;top:711px" width="6" height="10"><path d="M1 0.5 L5.2 5 L1 9.5" stroke="#a8a8a8" stroke-width="1.1" fill="none"/></svg>
<div class="a" style="left:117px;top:701px;width:57px;height:28px;background:#fff;border-radius:0 0 6px 6px;box-shadow:0 1px 1px rgba(0,0,0,0.10)"></div>
<div class="a" style="left:125px;top:724px;width:41px;height:2px;background:#107c41;border-radius:1px"></div>
<div class="a" style="left:178px;top:708px;width:1px;height:17px;background:#c8c8c8"></div>
<svg style="left:221px;top:711px" width="11" height="11"><path d="M5.5 0 V11 M0 5.5 H11" stroke="#424242" stroke-width="1.1"/></svg>
<div class="a" style="left:530px;top:713px;width:2px;height:2px;background:#242424"></div>
<div class="a" style="left:530px;top:717px;width:2px;height:2px;background:#242424"></div>
<div class="a" style="left:530px;top:721px;width:2px;height:2px;background:#242424"></div>
<div class="a" style="left:545px;top:705px;width:318px;height:22px;background:#f3f3f3"></div>
<svg style="left:552px;top:712px" width="7" height="9"><path d="M6.5 0.5 L0.5 4.5 L6.5 8.5Z" fill="#707070" stroke="#707070" stroke-width="0.8" stroke-linejoin="round"/></svg>
<div class="a" style="left:564px;top:712px;width:209px;height:9px;border-radius:5px;background:#757575"></div>
<svg style="left:848px;top:712px" width="7" height="9"><path d="M0.5 0.5 L6.5 4.5 L0.5 8.5Z" fill="#707070" stroke="#707070" stroke-width="0.8" stroke-linejoin="round"/></svg>
<div class="a" style="left:1px;top:733px;width:877px;height:21px;background:#f0f0f0;border-top:1px solid #fafafa"></div>
<svg style="left:63px;top:738px" width="15" height="13"><path d="M5.6 11.4 H0.6 V0.6 H13.4 V4.6" stroke="#242424" stroke-width="1.2" fill="none"/><path d="M0.6 2.2 H13.4" stroke="#242424" stroke-width="1.1"/><path d="M2 4.8 H4.2 M2 6.8 H4.2 M2 8.8 H4.2" stroke="#242424" stroke-width="1"/><circle cx="9.4" cy="8.4" r="3.9" stroke="#242424" stroke-width="1.1" fill="#f0f0f0"/><rect x="8.2" y="7.2" width="2.4" height="2.4" fill="#242424"/></svg>
<svg style="left:95px;top:737px" width="15" height="14"><circle cx="5.8" cy="2.4" r="1.7" stroke="#242424" stroke-width="1.1" fill="none"/><path d="M0.8 2.6 C1.4 4.6 3.2 5.4 4.4 5.4 L4.2 9.4 L3.2 12.4 C3.4 13.4 4.4 13.2 4.6 12.4 L5.8 9.2 M7.2 5.4 C8.4 5.4 10.4 4.6 11 2.6" stroke="#242424" stroke-width="1.1" fill="none" stroke-linecap="round"/><path d="M7.8 8 L13.8 13.6 M13.8 8 L7.8 13.6" stroke="#242424" stroke-width="1"/></svg>
<div class="a" style="left:568px;top:733px;width:40px;height:21px;background:#dedede"></div>
<svg style="left:581px;top:737px" width="13" height="13"><path d="M0.5 0.5 H12.5 V12.5 H0.5 Z M4.5 0.5 V12.5 M8.5 0.5 V12.5 M0.5 4.5 H12.5 M0.5 8.5 H12.5" stroke="#242424" stroke-width="1" fill="none"/></svg>
<svg style="left:621px;top:737px" width="14" height="13"><rect x="0.5" y="0.5" width="13" height="12" stroke="#242424" stroke-width="1.1" fill="none"/><rect x="3.5" y="2.5" width="7" height="8" stroke="#242424" fill="none"/><path d="M5 4.5 H9 M5 6.5 H9 M5 8.5 H9" stroke="#242424" stroke-width="1"/></svg>
<svg style="left:661px;top:737px" width="14" height="13"><rect x="0.5" y="0.5" width="13" height="12" stroke="#242424" stroke-width="1.1" fill="none"/><path d="M0.5 7.5 H9.5 V0.5 M5.5 0.5 V7.5" stroke="#242424" fill="none"/></svg>
<div class="a" style="left:695px;top:743px;width:8px;height:1px;background:#242424"></div>
<div class="a" style="left:707px;top:744px;width:100px;height:1px;background:#6e6e6e"></div>
<div class="a" style="left:755px;top:739px;width:5px;height:11px;background:#6e6e6e"></div>
<svg style="left:811px;top:739px" width="9" height="9"><path d="M4.5 0 V9 M0 4.5 H9" stroke="#242424" stroke-width="1"/></svg>
<div class="a" style="left:0px;top:754px;width:880px;height:2px;background:#28302c"></div>
<svg style="left:0;top:0" width="880" height="756"><text x="57.50" y="29.80" font-family="Liberation Sans" font-size="13" font-weight="normal" fill="#242424" textLength="22.30" lengthAdjust="spacingAndGlyphs">data</text><text x="372.30" y="30.40" font-family="Liberation Sans" font-size="13.5" font-weight="normal" fill="#616161" textLength="38.42" lengthAdjust="spacingAndGlyphs">Search</text><text x="705.80" y="29.20" font-family="Liberation Sans" font-size="11" font-weight="normal" fill="#fff" textLength="10.49" lengthAdjust="spacingAndGlyphs">JS</text><text x="23.50" y="69.00" font-family="Liberation Sans" font-size="13" font-weight="normal" fill="#242424" textLength="17.90" lengthAdjust="spacingAndGlyphs">File</text><text x="125.40" y="69.00" font-family="Liberation Sans" font-size="13" font-weight="normal" fill="#242424" textLength="31.41" lengthAdjust="spacingAndGlyphs">Insert</text><text x="180.00" y="69.00" font-family="Liberation Sans" font-size="13" font-weight="normal" fill="#242424" textLength="71.00" lengthAdjust="spacingAndGlyphs">Page Layout</text><text x="273.10" y="69.00" font-family="Liberation Sans" font-size="13" font-weight="normal" fill="#242424" textLength="52.48" lengthAdjust="spacingAndGlyphs">Formulas</text><text x="347.10" y="69.00" font-family="Liberation Sans" font-size="13" font-weight="normal" fill="#242424" textLength="26.46" lengthAdjust="spacingAndGlyphs">Data</text><text x="395.40" y="69.00" font-family="Liberation Sans" font-size="13" font-weight="normal" fill="#242424" textLength="39.53" lengthAdjust="spacingAndGlyphs">Review</text><text x="455.50" y="69.00" font-family="Liberation Sans" font-size="13" font-weight="normal" fill="#242424" textLength="26.35" lengthAdjust="spacingAndGlyphs">View</text><text x="504.10" y="69.00" font-family="Liberation Sans" font-size="13" font-weight="normal" fill="#242424" textLength="55.29" lengthAdjust="spacingAndGlyphs">Automate</text><text x="582.40" y="69.00" font-family="Liberation Sans" font-size="13" font-weight="normal" fill="#242424" textLength="59.40" lengthAdjust="spacingAndGlyphs">Developer</text><text x="662.40" y="69.00" font-family="Liberation Sans" font-size="13" font-weight="normal" fill="#242424" textLength="26.09" lengthAdjust="spacingAndGlyphs">Help</text><text x="68.70" y="69.00" font-family="Liberation Sans" font-size="13" font-weight="bold" fill="#242424" textLength="35.82" lengthAdjust="spacingAndGlyphs">Home</text><text x="758.60" y="68.80" font-family="Liberation Sans" font-size="13" font-weight="normal" fill="#242424" textLength="61.00" lengthAdjust="spacingAndGlyphs">Comments</text><text x="33.50" y="173.00" font-family="Liberation Sans" font-size="12" font-weight="normal" fill="#242424" textLength="50.02" lengthAdjust="spacingAndGlyphs">Clipboard</text><text x="182.60" y="172.70" font-family="Liberation Sans" font-size="12" font-weight="normal" fill="#242424" textLength="23.11" lengthAdjust="spacingAndGlyphs">Font</text><text x="496.40" y="172.90" font-family="Liberation Sans" font-size="12" font-weight="normal" fill="#242424" textLength="27.88" lengthAdjust="spacingAndGlyphs">Styles</text><text x="724.20" y="172.50" font-family="Liberation Sans" font-size="12" font-weight="normal" fill="#242424" textLength="39.19" lengthAdjust="spacingAndGlyphs">Add-ins</text><text x="28.60" y="133.60" font-family="Liberation Sans" font-size="12" font-weight="normal" fill="#242424" textLength="27.39" lengthAdjust="spacingAndGlyphs">Paste</text><text x="236.00" y="98.80" font-family="Liberation Sans" font-size="12.3" font-weight="normal" fill="#242424" textLength="11.18" lengthAdjust="spacingAndGlyphs">16</text><text x="137.50" y="124.50" font-family="Liberation Sans" font-size="13" font-weight="bold" fill="#242424" textLength="7.39" lengthAdjust="spacingAndGlyphs">B</text><text x="291.20" y="130.80" font-family="Liberation Sans" font-size="12" font-weight="normal" fill="#242424" textLength="55.51" lengthAdjust="spacingAndGlyphs">Alignment</text><text x="365.50" y="130.80" font-family="Liberation Sans" font-size="12" font-weight="normal" fill="#242424" textLength="43.28" lengthAdjust="spacingAndGlyphs">Number</text><text x="451.50" y="100.00" font-family="Liberation Sans" font-size="12.5" font-weight="normal" fill="#242424" textLength="123.00" lengthAdjust="spacingAndGlyphs">Conditional Formatting</text><text x="451.50" y="125.90" font-family="Liberation Sans" font-size="12.5" font-weight="normal" fill="#242424" textLength="81.59" lengthAdjust="spacingAndGlyphs">Format as Table</text><text x="451.50" y="151.50" font-family="Liberation Sans" font-size="12.5" font-weight="normal" fill="#242424" textLength="52.30" lengthAdjust="spacingAndGlyphs">Cell Styles</text><text x="617.70" y="130.70" font-family="Liberation Sans" font-size="12.5" font-weight="normal" fill="#242424" textLength="24.49" lengthAdjust="spacingAndGlyphs">Cells</text><text x="666.50" y="130.70" font-family="Liberation Sans" font-size="12.5" font-weight="normal" fill="#242424" textLength="35.82" lengthAdjust="spacingAndGlyphs">Editing</text><text x="723.40" y="132.90" font-family="Liberation Sans" font-size="12.7" font-weight="normal" fill="#242424" textLength="41.51" lengthAdjust="spacingAndGlyphs">Add-ins</text><text x="794.50" y="130.70" font-family="Liberation Sans" font-size="12.5" font-weight="normal" fill="#242424" textLength="23.41" lengthAdjust="spacingAndGlyphs">New</text><text x="784.40" y="146.90" font-family="Liberation Sans" font-size="12.5" font-weight="normal" fill="#242424" textLength="32.49" lengthAdjust="spacingAndGlyphs">Group</text><text x="16.00" y="208.75" font-family="Liberation Serif" font-size="21.33" font-weight="normal" fill="#000" textLength="24.98" lengthAdjust="spacingAndGlyphs">H2</text><text x="408.00" y="210.00" font-family="Liberation Serif" font-size="17" font-weight="bold" fill="#424242" font-style="italic" textLength="14.01" lengthAdjust="spacingAndGlyphs">fx</text><text text-anchor="end" x="409.3" data-x="0.00" y="557.30" font-family="Liberation Sans" font-size="10" font-weight="normal" fill="#595959">0</text><text text-anchor="end" x="409.3" data-x="0.00" y="535.20" font-family="Liberation Sans" font-size="10" font-weight="normal" fill="#595959">0.05</text><text text-anchor="end" x="409.3" data-x="0.00" y="513.40" font-family="Liberation Sans" font-size="10" font-weight="normal" fill="#595959">0.1</text><text text-anchor="end" x="409.3" data-x="0.00" y="491.00" font-family="Liberation Sans" font-size="10" font-weight="normal" fill="#595959">0.15</text><text text-anchor="end" x="409.3" data-x="0.00" y="469.20" font-family="Liberation Sans" font-size="10" font-weight="normal" fill="#595959">0.2</text><text text-anchor="end" x="409.3" data-x="0.00" y="447.20" font-family="Liberation Sans" font-size="10" font-weight="normal" fill="#595959">0.25</text><text x="442.52" y="569.8" text-anchor="middle" font-family="Liberation Sans" font-size="9.5" fill="#595959">B1</text><text x="491.57" y="569.8" text-anchor="middle" font-family="Liberation Sans" font-size="9.5" fill="#595959">B2</text><text x="540.62" y="569.8" text-anchor="middle" font-family="Liberation Sans" font-size="9.5" fill="#595959">B3</text><text x="589.67" y="569.8" text-anchor="middle" font-family="Liberation Sans" font-size="9.5" fill="#595959">B4</text><text x="638.73" y="569.8" text-anchor="middle" font-family="Liberation Sans" font-size="9.5" fill="#595959">B5</text><text x="687.77" y="569.8" text-anchor="middle" font-family="Liberation Sans" font-size="9.5" fill="#595959">B6</text><text x="734.30" y="550.00" font-family="Liberation Sans" font-size="10.5" font-weight="normal" fill="#595959" textLength="35.20" lengthAdjust="spacingAndGlyphs">Series1</text><text x="765.70" y="524.50" font-family="Liberation Sans" font-size="10.5" font-weight="normal" fill="#595959" textLength="36.30" lengthAdjust="spacingAndGlyphs">Series3</text><text x="537.00" y="589.70" font-family="Liberation Sans" font-size="12" font-weight="normal" fill="#595959" textLength="56.18" lengthAdjust="spacingAndGlyphs">Categories</text><text transform="translate(382.6,498) rotate(-90)" text-anchor="middle" font-family="Liberation Sans" font-size="12.5" fill="#595959" textLength="36" lengthAdjust="spacingAndGlyphs">Values</text><text x="546.30" y="358.75" font-family="Liberation Sans" font-size="16.3" font-weight="normal" fill="#595959" textLength="75.58" lengthAdjust="spacingAndGlyphs">Chart Title</text><text x="517.40" y="647.80" font-family="Liberation Sans" font-size="10.5" font-weight="normal" fill="#595959" textLength="34.80" lengthAdjust="spacingAndGlyphs">Series1</text><text x="573.40" y="647.80" font-family="Liberation Sans" font-size="10.5" font-weight="normal" fill="#595959" textLength="35.80" lengthAdjust="spacingAndGlyphs">Series2</text><text x="629.80" y="647.80" font-family="Liberation Sans" font-size="10.5" font-weight="normal" fill="#595959" textLength="35.40" lengthAdjust="spacingAndGlyphs">Series3</text><text x="125.20" y="718.70" font-family="Liberation Sans" font-size="13" font-weight="bold" fill="#242424" textLength="40.58" lengthAdjust="spacingAndGlyphs">Sheet1</text><text x="12.50" y="748.60" font-family="Liberation Sans" font-size="11" font-weight="normal" fill="#000" textLength="30.40" lengthAdjust="spacingAndGlyphs">Ready</text><text x="113.50" y="747.90" font-family="Liberation Sans" font-size="11" font-weight="bold" fill="#242424" textLength="125.00" lengthAdjust="spacingAndGlyphs">Accessibility: Investigate</text><text x="833.60" y="748.00" font-family="Liberation Sans" font-size="11" font-weight="normal" fill="#242424" textLength="26.39" lengthAdjust="spacingAndGlyphs">100%</text></svg>
<div class="a" style="left:1px;top:1px;width:1px;height:753px;background:#f8f8f8"></div><div id="bd"></div>
</div>
</body></html>
